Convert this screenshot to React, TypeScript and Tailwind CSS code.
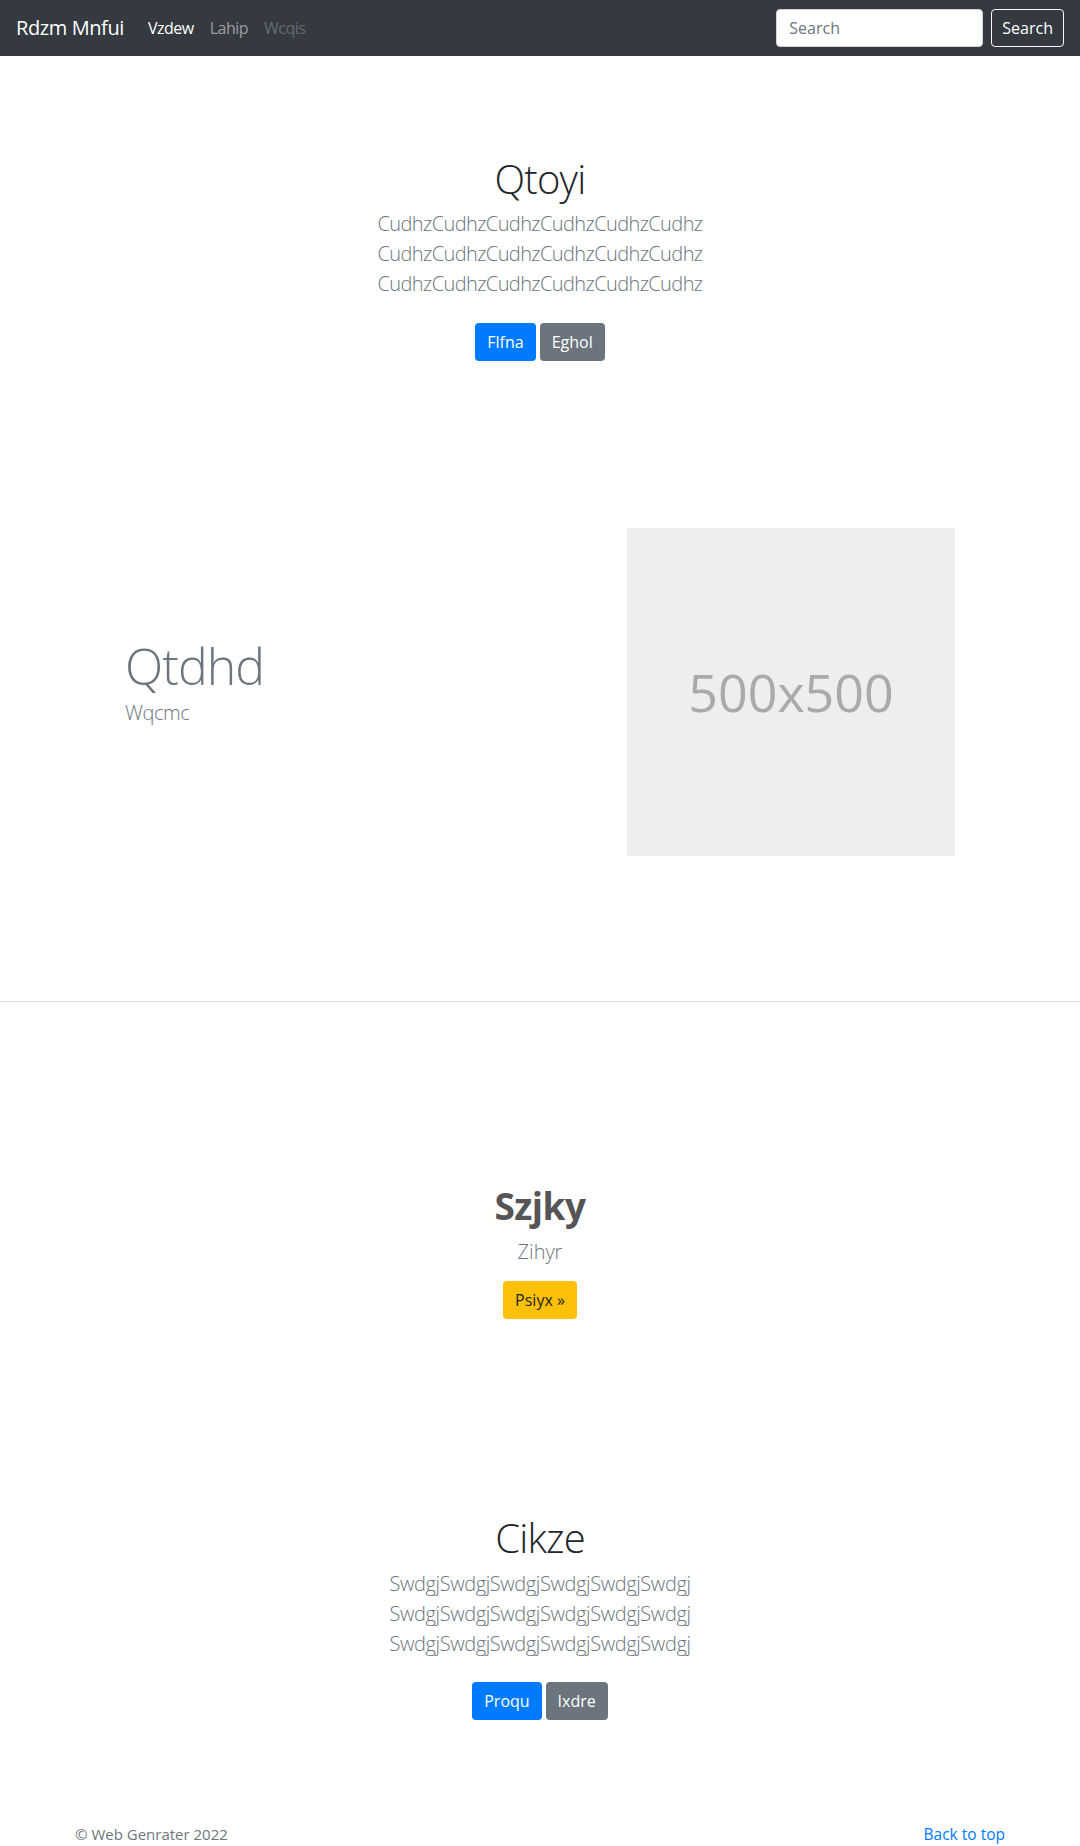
import React from "react";

const font = { fontFamily: '"Open Sans", "Noto Sans", "Liberation Sans", sans-serif' };

const Lead = ({ text, spacing }: { text: string; spacing: string }) => (
  <p className={`text-[20px] leading-[30px] font-light text-[#6c757d] ${spacing}`}>
    {text}
    <br />
    {text}
    <br />
    {text}
  </p>
);

const Btn = ({ label, color }: { label: string; color: string }) => (
  <a
    href="#"
    className={`inline-flex h-[38px] items-center rounded-[4px] px-3 text-[16px] text-white ${color}`}
  >
    {label}
  </a>
);

const App = () => {
  return (
    <div className="min-h-[1846px] bg-white text-[#212529]" style={font}>
      {/* NAVBAR */}
      <nav className="flex h-[56px] items-center bg-[#343a40] px-4">
        <a href="#" className="mr-[16px] text-[20px] text-white tracking-[-0.4px]">
          Rdzm Mnfui
        </a>
        <ul className="flex text-[16px] tracking-[-0.5px]">
          <li className="px-2 text-white">Vzdew</li>
          <li className="px-2 text-white/50">Lahip</li>
          <li className="px-2 text-white/25">Wcqis</li>
        </ul>
        <div className="ml-auto flex items-center">
          <input
            className="mr-2 h-[38px] w-[207px] rounded-[4px] border border-[#ced4da] bg-white px-3 text-[16px] text-[#495057] placeholder:text-[#6c757d]"
            placeholder="Search"
          />
          <button className="h-[38px] rounded-[4px] border border-[#f8f9fa] px-[10px] text-[16px] text-white">
            Search
          </button>
        </div>
      </nav>

      {/* JUMBOTRON */}
      <section className="pt-[99px] text-center">
        <h1 className="mb-[6px] text-[40px] leading-[48px] font-light tracking-[-0.8px]">Qtoyi</h1>
        <Lead text="CudhzCudhzCudhzCudhzCudhzCudhz" spacing="tracking-[-0.6px]" />
        <div className="mt-[24px] flex justify-center gap-1">
          <Btn label="Flfna" color="bg-[#007bff]" />
          <Btn label="Eghol" color="bg-[#6c757d]" />
        </div>
      </section>

      {/* FEATURETTE */}
      <section className="mx-auto mt-[167px] flex w-[960px] items-center">
        <div className="flex-1 pb-[20px] pl-[65px]">
          <h2 className="text-[50px] leading-[60px] font-light text-[#6c757d] tracking-[-1px]">Qtdhd</h2>
          <p className="mt-[2px] text-[20px] leading-[30px] font-light text-[#6c757d] tracking-[-0.4px]">Wqcmc</p>
        </div>
        <div className="mr-[65px] flex h-[328px] w-[328px] items-center justify-center bg-[#eeeeee] text-[52px] text-[#aaaaaa]">
          500x500
        </div>
      </section>

      <hr className="mt-[145px] border-t border-[#e5e5e5]" />

      {/* CALL TO ACTION */}
      <section className="mt-[180px] text-center">
        <h2 className="text-[37px] leading-[48px] font-bold text-[#555555] tracking-[-0.5px]">Szjky</h2>
        <p className="mt-[7px] text-[20px] leading-[30px] font-light text-[#6c757d]">Zihyr</p>
        <div className="mt-[14px] flex justify-center">
          <a
            href="#"
            className="inline-flex h-[38px] items-center rounded-[4px] bg-[#ffc107] px-3 text-[16px] text-[#212529]"
          >
            Psiyx »
          </a>
        </div>
      </section>

      {/* SECOND JUMBOTRON */}
      <section className="mt-[195px] text-center">
        <h1 className="mb-[7px] text-[40px] leading-[48px] font-light tracking-[-0.8px]">Cikze</h1>
        <Lead text="SwdgjSwdgjSwdgjSwdgjSwdgjSwdgj" spacing="tracking-[-0.4px]" />
        <div className="mt-[23px] flex justify-center gap-1">
          <Btn label="Proqu" color="bg-[#007bff]" />
          <Btn label="Ixdre" color="bg-[#6c757d]" />
        </div>
      </section>

      {/* FOOTER */}
      <footer className="mx-auto mt-[102px] flex w-[960px] justify-between px-[15px] text-[15px] leading-[24px] text-[#6c757d]">
        <p>© Web Genrater 2022</p>
        <a href="#" className="text-[15.5px] text-[#007bff]">
          Back to top
        </a>
      </footer>
    </div>
  );
};

export default App;
